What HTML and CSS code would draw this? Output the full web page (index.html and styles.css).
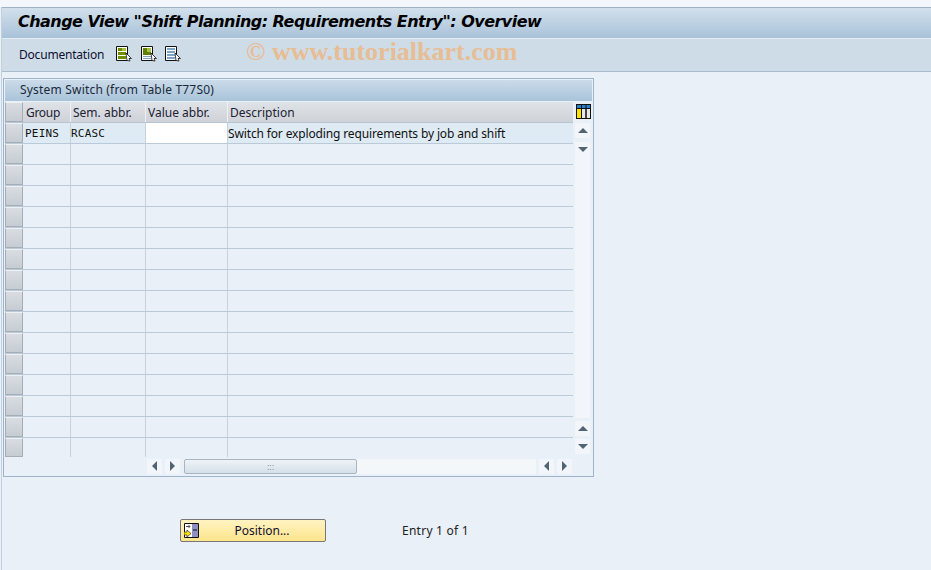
FILE: index.html
```html
<!DOCTYPE html>
<html lang="en">
<head>
<meta charset="utf-8">
<title>Change View</title>
<link rel="stylesheet" href="styles.css">
</head>
<body>
<div class="topstrip"></div>
<div class="main">
  <header class="titlebar"><h1>Change View "Shift Planning: Requirements Entry": Overview</h1></header>
  <nav class="toolbar">
    <span class="tool-label">Documentation</span>
    <svg class="tool-icon first" viewBox="0 0 16 16" width="16" height="16"><path d="M.5.500h11v14H.5z" fill="#fff" stroke="#111"/><path d="M2 2h8v3H2zM2 6h8v3H2zM2 10h8v3H2z" fill="#6f8f00"/><path d="M6 2h4v3H6z" fill="#a8c040"/><path d="M10 7l5.500 5.500h-2.500l1 2.500-3-.5z" fill="#fff" stroke="#111" stroke-width=".8"/></svg>
    <svg class="tool-icon" viewBox="0 0 16 16" width="16" height="16"><path d="M.5.500h11v14H.5z" fill="#fff" stroke="#111"/><path d="M2 2h8v7H2z" fill="#5f8200"/><path d="M6 2h4v4H6z" fill="#a8c040"/><path d="M2 10.500h8M2 12.500h8" stroke="#7fa5c4"/><path d="M10 7l5.500 5.500h-2.500l1 2.500-3-.5z" fill="#fff" stroke="#111" stroke-width=".8"/></svg>
    <svg class="tool-icon" viewBox="0 0 16 16" width="16" height="16"><path d="M.5.500h11v14H.5z" fill="#fff" stroke="#111"/><path d="M2 2h8v2H2zM2 5h8v2H2zM2 8h8v2H2zM2 11h8v2H2z" fill="#7fa5c4"/><path d="M10 7l5.500 5.500h-2.500l1 2.500-3-.5z" fill="#fff" stroke="#111" stroke-width=".8"/></svg>
    <span class="watermark">© www.tutorialkart.com</span>
  </nav>
  <section class="panel">
    <div class="panel-title">System Switch (from Table T77S0)</div>
    <div class="table-wrap">
      <div class="table">
        <div class="row head">
          <span class="selector"></span><span class="group-head">Group</span><span>Sem. abbr.</span><span>Value abbr.</span><span>Description</span>
        </div>
        <div class="row first-row">
          <span class="selector"></span><span class="mono">PEINS</span><span class="mono tight">RCASC</span><span class="input"></span><span class="tight desc">Switch for exploding requirements by job and shift</span>
        </div>
        <div class="row"><span class="selector"></span><span></span><span></span><span></span><span></span></div>
        <div class="row"><span class="selector"></span><span></span><span></span><span></span><span></span></div>
        <div class="row"><span class="selector"></span><span></span><span></span><span></span><span></span></div>
        <div class="row"><span class="selector"></span><span></span><span></span><span></span><span></span></div>
        <div class="row"><span class="selector"></span><span></span><span></span><span></span><span></span></div>
        <div class="row"><span class="selector"></span><span></span><span></span><span></span><span></span></div>
        <div class="row"><span class="selector"></span><span></span><span></span><span></span><span></span></div>
        <div class="row"><span class="selector"></span><span></span><span></span><span></span><span></span></div>
        <div class="row"><span class="selector"></span><span></span><span></span><span></span><span></span></div>
        <div class="row"><span class="selector"></span><span></span><span></span><span></span><span></span></div>
        <div class="row"><span class="selector"></span><span></span><span></span><span></span><span></span></div>
        <div class="row"><span class="selector"></span><span></span><span></span><span></span><span></span></div>
        <div class="row"><span class="selector"></span><span></span><span></span><span></span><span></span></div>
        <div class="row"><span class="selector"></span><span></span><span></span><span></span><span></span></div>
        <div class="row last-row"><span class="selector"></span><span></span><span></span><span></span><span></span></div>
      </div>
      <div class="vscroll">
        <svg class="settings" viewBox="0 0 15 15" width="15" height="15"><path d="M0 0h15v15H0z" fill="#111"/><path d="M1 1h13v3H1z" fill="#2c7fc9"/><path d="M1 5h4v9H1z" fill="#ffe100"/><path d="M6 5h3.500v9H6zM10.500 5H14v9h-3.500z" fill="#e8e8e8"/><path d="M5 1h1v13H5zM9.500 1h1v13h-1z" fill="#111"/></svg>
        <span class="sbtn wide-gap"><i class="tri up"></i></span>
        <span class="sbtn"><i class="tri down"></i></span>
        <span class="vtrack"></span>
        <span class="sbtn"><i class="tri up"></i></span>
        <span class="sbtn"><i class="tri down"></i></span>
      </div>
    </div>
    <div class="hscroll">
      <span class="sbtn h"><i class="tri left"></i></span>
      <span class="sbtn h"><i class="tri right"></i></span>
      <div class="htrack"><div class="thumb">:::</div></div>
      <span class="sbtn h"><i class="tri left"></i></span>
      <span class="sbtn h"><i class="tri right"></i></span>
    </div>
  </section>
  <div class="footer">
    <button class="pos-btn" type="button">
      <svg viewBox="0 0 15 15" width="15" height="15"><path d="M.5.500h14v14H.5z" fill="#fff" stroke="#111"/><path d="M8 1h6v13H8z" fill="#8c8fc0"/><path d="M9 7h4" stroke="#111"/><path d="M2 3.500h4M4.500 2l1.500 1.500L4.500 5" fill="none" stroke="#555"/><path d="M0 9h3V7l4 3.500L3 14v-2H0z" fill="#ffe100" stroke="#333" stroke-width=".7"/></svg>
      <span>Position...</span>
    </button>
    <span class="entry">Entry 1 of 1</span>
  </div>
</div>
</body>
</html>
```
FILE: styles.css
```css
* { box-sizing: border-box; }
html, body { margin: 0; padding: 0; height: 100%; }
body {
  background: #e9f0f7;
  font-family: "Noto Sans", sans-serif;
  font-size: 12px;
  color: #111;
  overflow: hidden;
}
.topstrip { height: 7px; background: #f3f6fb; }
.main {
  margin-left: 1px;
  border-left: 1px solid #c3d0dd;
  height: 563px;
  position: relative;
}
.titlebar {
  height: 31px;
  border-top: 1px solid #9fb0c2;
  background: linear-gradient(#d2e0ec, #a9c2d9);
  padding: 0 0 4px 16px;
  display: flex;
  align-items: center;
}
.titlebar h1 {
  margin: 0;
  font-family: "DejaVu Sans", sans-serif;
  font-size: 16px;
  letter-spacing: -.53px;
  font-weight: bold;
  font-style: italic;
  color: #000;
  white-space: nowrap;
}
.toolbar {
  height: 34px;
  background: #cedce8;
  border-top: 1px solid #e4edf4;
  border-bottom: 1px solid #a9bccd;
  display: flex;
  align-items: center;
  padding: 0 0 2px 17px;
  position: relative;
}
.tool-label { color: #101030; margin-right: 12px; width: 85px; flex: none; letter-spacing: -.2px; }
.tool-icon { margin: -1px 8.500px 0 0; flex: none; }
.watermark {
  position: absolute;
  left: 244px;
  top: -2px;
  font-family: "Liberation Serif", serif;
  font-weight: bold;
  font-size: 26px;
  color: #e7bd94;
  white-space: nowrap;
}
.panel {
  margin: 6px 0 0 1px;
  width: 591px;
  height: 399px;
  border: 1px solid #9db4ca;
  padding: 1px 1px 0;
  background: #e9f0f7;
}
.panel-title {
  height: 21px;
  background: linear-gradient(#cbdbe9, #a9c3da);
  padding-left: 15px;
  line-height: 20px;
  letter-spacing: .19px;
  color: #1a2a3a;
}
.table-wrap { display: flex; margin-top: 1px; height: 355px; }
.table { width: 568px; flex: none; }
.row {
  display: grid;
  grid-template-columns: 18px 48px 75px 82px 345px;
  height: 21px;
  border-bottom: 1px solid #bcc9d6;
}
.row > span {
  border-right: 1px solid #c8d2dc;
  padding-left: 2px;
  line-height: 22px;
  white-space: nowrap;
  overflow: hidden;
}
.row > span:last-child { border-right: 0; }
.row > .selector {
  background: linear-gradient(#d9dde2, #c6ccd3);
  border: 1px solid #a4aeb9;
  border-top-color: #eef1f4;
  padding: 0;
}
.head {
  background: linear-gradient(#dfe2e6, #cfd3d9);
  border-bottom: 1px solid #b7c4d1;
  color: #223;
}
.head > span { border-right-color: #eef1f4; }
.row > .group-head { padding-left: 3px; letter-spacing: -.3px; }
.first-row { background: #deeaf4; }
.last-row { height: 19px; border-bottom: 0; }
.row > .input { background: #fff; border-left: 0; }
.row > .mono {
  font-family: "DejaVu Sans Mono", monospace;
  font-size: 11px;
  letter-spacing: .2px;
}
.row > .tight { padding-left: 0; }
.row > .desc { letter-spacing: -.14px; }
.vscroll {
  width: 18px;
  padding-left: 2px;
  display: flex;
  flex-direction: column;
  align-items: flex-start;
  flex: none;
}
.settings { margin: 2px 0 4px 1px; flex: none; }
.sbtn {
  width: 15px;
  height: 15px;
  background: #f2f5f9;
  display: flex;
  align-items: center;
  justify-content: center;
  flex: none;
  margin-bottom: 3px;
}
.sbtn.wide-gap { margin-bottom: 4px; }
.vtrack { flex: 1; width: 15px; background: #f2f5f9; margin-bottom: 3px; margin-top: -3px; }
.tri { display: block; width: 0; height: 0; border-style: solid; border-color: transparent; }
.tri.up { border-width: 0 5px 5px; border-bottom-color: #4f6475; }
.tri.down { border-width: 5px 5px 0; border-top-color: #4f6475; }
.tri.left { border-width: 5px 5px 5px 0; border-right-color: #4f6475; }
.tri.right { border-width: 5px 0 5px 5px; border-left-color: #4f6475; }
.hscroll {
  display: flex;
  align-items: center;
  padding-left: 142px;
  height: 16px;
  margin-top: 1px;
}
.sbtn.h { margin: 0 3px 0 0; }
.htrack {
  width: 352px;
  height: 15px;
  background: #f4f7fa;
  margin: 0 3px 0 1px;
}
.thumb {
  width: 173px;
  height: 15px;
  background: linear-gradient(#eef3f7, #d5e0e9);
  border: 1px solid #a9b5c1;
  border-radius: 2px;
  color: #8a97a3;
  font-size: 9px;
  line-height: 13px;
  text-align: center;
}
.footer {
  display: flex;
  align-items: center;
  padding: 42px 0 0 178px;
}
.pos-btn {
  width: 146px;
  height: 23px;
  padding: 0 0 0 3px;
  border: 1px solid #777;
  border-radius: 2px;
  background: linear-gradient(#fff3c2, #fde58c);
  font: inherit;
  color: #101030;
  display: flex;
  align-items: center;
}
.pos-btn span { flex: 1; text-align: center; }
.entry { margin-left: 76px; color: #222; letter-spacing: .25px; }
```
